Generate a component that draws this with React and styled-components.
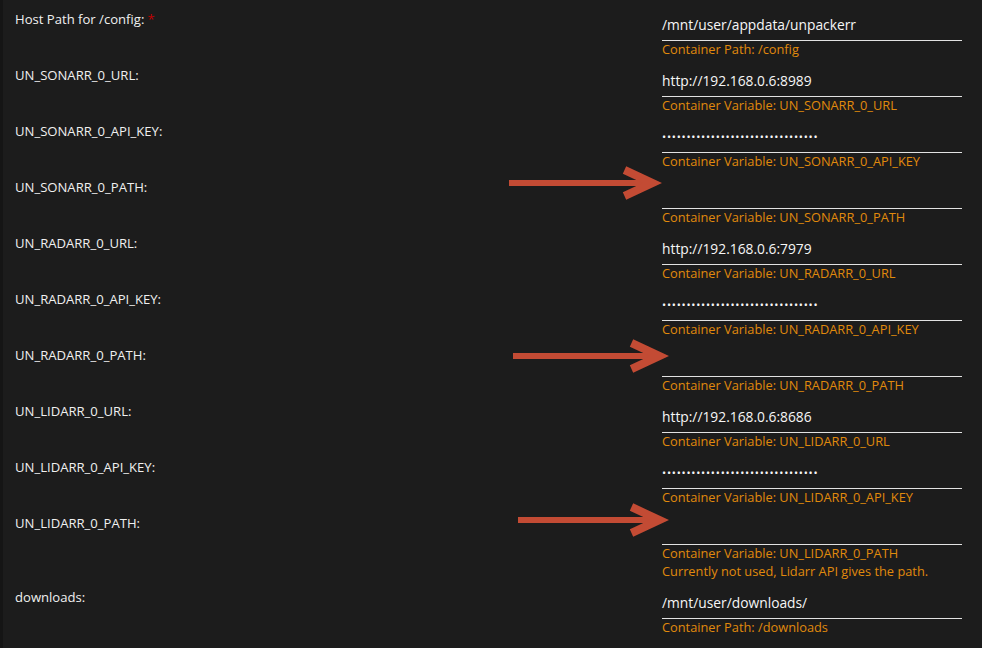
import React from "react";
import styled, { createGlobalStyle } from "styled-components";

const Global = createGlobalStyle`
  html, body { margin: 0; padding: 0; background: #1c1c1c; }
  body { font-family: "Open Sans", "Noto Sans", sans-serif; }
`;

const Page = styled.div`
  position: relative;
  width: 982px;
  min-height: 648px;
  box-sizing: border-box;
  background: #1c1c1c;
  border-left: 3px solid #151515;
  padding-left: 12px;
  display: flex;
  flex-direction: column;
  overflow: hidden;
`;

const Row = styled.div`
  display: grid;
  grid-template-columns: 647px 300px;
`;

const Label = styled.div`
  padding-top: 10px;
  line-height: 18px;
  font-size: 13.1px;
  font-weight: 500;
  color: #f0f0f0;
  white-space: nowrap;
`;

const Req = styled.span`
  color: #c00000;
  margin-left: 3px;
`;

const ValueCol = styled.div`
  display: flex;
  flex-direction: column;
`;

const Field = styled.div`
  margin-top: 8px;
  height: 33px;
  box-sizing: border-box;
  border-bottom: 1px solid #e2e2e2;
  padding-top: 9px;
  line-height: 16px;
  font-size: 13.8px;
  font-weight: 500;
  color: #f6f6f6;
  white-space: nowrap;
`;

const Masked = styled.span`
  font-size: 11px;
  letter-spacing: 0.75px;
  position: relative;
  top: -1px;
`;

const Desc = styled.div`
  margin-top: -1px;
  margin-bottom: -2px;
  line-height: 18px;
  font-size: 12.8px;
  color: #e08a0c;
  white-space: nowrap;
`;

const ArrowWrap = styled.svg`
  position: absolute;
  pointer-events: none;
`;

function Arrow({ x, tip, y }) {
  const W = tip - x + 2;
  const H = 40;
  const c = H / 2;
  const T = W - 1;
  const j = T - 9.5;
  return (
    <ArrowWrap
      width={W}
      height={H}
      viewBox={`0 0 ${W} ${H}`}
      style={{ left: x, top: y - c }}
    >
      <rect x="0" y={c - 3} width={j - 4} height="6" fill="#c34b34" />
      <polyline
        points={`${j - 28},${c - 13} ${j},${c} ${j - 28},${c + 13}`}
        fill="none"
        stroke="#c34b34"
        strokeWidth="8"
        strokeLinejoin="miter"
        strokeMiterlimit="6"
      />
    </ArrowWrap>
  );
}

const DOTS = "•".repeat(32);

const rows = [
  { label: "Host Path for /config:", req: true, value: "/mnt/user/appdata/unpackerr", desc: ["Container Path: /config"] },
  { label: "UN_SONARR_0_URL:", value: "http://192.168.0.6:8989", desc: ["Container Variable: UN_SONARR_0_URL"] },
  { label: "UN_SONARR_0_API_KEY:", masked: true, desc: ["Container Variable: UN_SONARR_0_API_KEY"] },
  { label: "UN_SONARR_0_PATH:", value: "", desc: ["Container Variable: UN_SONARR_0_PATH"] },
  { label: "UN_RADARR_0_URL:", value: "http://192.168.0.6:7979", desc: ["Container Variable: UN_RADARR_0_URL"] },
  { label: "UN_RADARR_0_API_KEY:", masked: true, desc: ["Container Variable: UN_RADARR_0_API_KEY"] },
  { label: "UN_RADARR_0_PATH:", value: "", desc: ["Container Variable: UN_RADARR_0_PATH"] },
  { label: "UN_LIDARR_0_URL:", value: "http://192.168.0.6:8686", desc: ["Container Variable: UN_LIDARR_0_URL"] },
  { label: "UN_LIDARR_0_API_KEY:", masked: true, desc: ["Container Variable: UN_LIDARR_0_API_KEY"] },
  { label: "UN_LIDARR_0_PATH:", value: "", desc: ["Container Variable: UN_LIDARR_0_PATH", "Currently not used, Lidarr API gives the path."] },
  { label: "downloads:", value: "/mnt/user/downloads/", desc: ["Container Path: /downloads"] },
];

export default function App() {
  return (
    <>
      <Global />
      <Page>
        {rows.map((r) => (
          <Row key={r.label}>
            <Label>
              {r.label}
              {r.req && <Req>*</Req>}
            </Label>
            <ValueCol>
              <Field>{r.masked ? <Masked>{DOTS}</Masked> : r.value}</Field>
              <Desc>
                {r.desc.map((d) => (
                  <div key={d}>{d}</div>
                ))}
              </Desc>
            </ValueCol>
          </Row>
        ))}
        <Arrow x={506} tip={658} y={183} />
        <Arrow x={510} tip={665} y={356} />
        <Arrow x={515} tip={665} y={520} />
      </Page>
    </>
  );
}
